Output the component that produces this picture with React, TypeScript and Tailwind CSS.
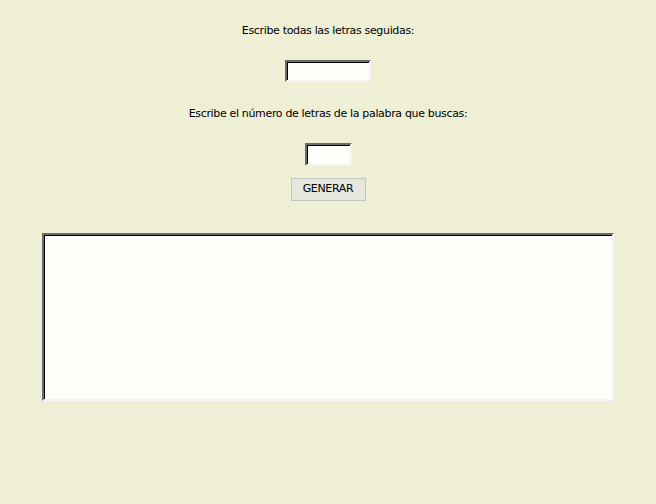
import React from "react";

export default function App() {
  const inset =
    "border-2 border-t-[#6b6b6b] border-l-[#6b6b6b] border-b-[#f4f4f4] border-r-[#f4f4f4] shadow-[inset_1px_1px_0_#000] bg-[#fdfdfa]";
  return (
    <div
      className="w-[656px] h-[504px] bg-[#efefd6] flex flex-col items-center text-[11px] tracking-[-0.34px] text-black"
      style={{ fontFamily: "Tahoma, 'DejaVu Sans', 'Liberation Sans', sans-serif" }}
    >
      <div className="mt-[24px] h-[14px] leading-[14px]">Escribe todas las letras seguidas:</div>
      <div className={`mt-[22px] w-[86px] h-[22px] ${inset}`} />
      <div className="mt-[25px] h-[14px] leading-[14px]">
        Escribe el número de letras de la palabra que buscas:
      </div>
      <div className={`mt-[22px] w-[47px] h-[23px] ${inset}`} />
      <div className="mt-[12px] w-[75px] h-[23px] border border-[#c4c4c4] bg-[#e6e6dc] flex items-center justify-center text-[11px]">
        GENERAR
      </div>
      <div className={`mt-[32px] w-[572px] h-[168px] ${inset}`} />
    </div>
  );
}
